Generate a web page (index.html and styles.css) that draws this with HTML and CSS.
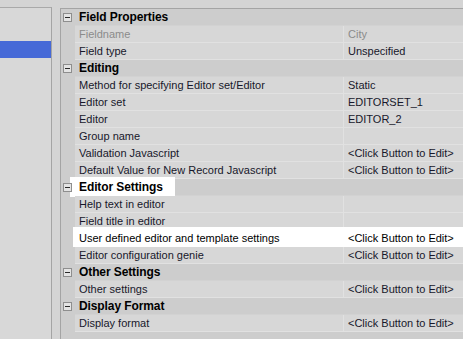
FILE: index.html
```html
<!DOCTYPE html>
<html lang="en">
<head>
    <meta charset="UTF-8">
    <title>Field Properties</title>
    <link rel="stylesheet" href="styles.css">
</head>
<body>
    <div class="window">
        <div class="sidebar">
            <div class="selected"></div>
        </div>
        <div class="grid">
            <div class="row cat">
                <span class="margin"><span class="toggle"></span></span>
                <span class="cat-name">Field Properties</span>
            </div>
            <div class="row disabled">
                <span class="margin"></span>
                <span class="name">Fieldname</span>
                <span class="value">City</span>
            </div>
            <div class="row">
                <span class="margin"></span>
                <span class="name">Field type</span>
                <span class="value">Unspecified</span>
            </div>

            <div class="row cat">
                <span class="margin"><span class="toggle"></span></span>
                <span class="cat-name">Editing</span>
            </div>
            <div class="row">
                <span class="margin"></span>
                <span class="name">Method for specifying Editor set/Editor</span>
                <span class="value">Static</span>
            </div>
            <div class="row">
                <span class="margin"></span>
                <span class="name">Editor set</span>
                <span class="value">EDITORSET_1</span>
            </div>
            <div class="row">
                <span class="margin"></span>
                <span class="name">Editor</span>
                <span class="value">EDITOR_2</span>
            </div>
            <div class="row">
                <span class="margin"></span>
                <span class="name">Group name</span>
                <span class="value"></span>
            </div>
            <div class="row">
                <span class="margin"></span>
                <span class="name">Validation Javascript</span>
                <span class="value">&lt;Click Button to Edit&gt;</span>
            </div>
            <div class="row">
                <span class="margin"></span>
                <span class="name">Default Value for New Record Javascript</span>
                <span class="value">&lt;Click Button to Edit&gt;</span>
            </div>

            <div class="row cat">
                <span class="margin"><span class="toggle"></span></span>
                <span class="cat-name"><span class="mark">Editor Settings</span></span>
            </div>
            <div class="row">
                <span class="margin"></span>
                <span class="name">Help text in editor</span>
                <span class="value"></span>
            </div>
            <div class="row">
                <span class="margin"></span>
                <span class="name">Field title in editor</span>
                <span class="value"></span>
            </div>
            <div class="row lit">
                <span class="margin"></span>
                <span class="name">User defined editor and template settings</span>
                <span class="value">&lt;Click Button to Edit&gt;</span>
            </div>
            <div class="row">
                <span class="margin"></span>
                <span class="name">Editor configuration genie</span>
                <span class="value">&lt;Click Button to Edit&gt;</span>
            </div>

            <div class="row cat">
                <span class="margin"><span class="toggle"></span></span>
                <span class="cat-name">Other Settings</span>
            </div>
            <div class="row">
                <span class="margin"></span>
                <span class="name">Other settings</span>
                <span class="value">&lt;Click Button to Edit&gt;</span>
            </div>

            <div class="row cat">
                <span class="margin"><span class="toggle"></span></span>
                <span class="cat-name">Display Format</span>
            </div>
            <div class="row">
                <span class="margin"></span>
                <span class="name">Display format</span>
                <span class="value">&lt;Click Button to Edit&gt;</span>
            </div>
        </div>
    </div>
</body>
</html>
```

FILE: styles.css
```css
body {
    margin: 0;
    background: #d4d4d4;
    color: #17172b;
    font-family: "Liberation Sans", Arial, sans-serif;
    font-size: 11px;
    height: 100vh;
    overflow: hidden;
}
.window {
    display: flex;
    height: 100%;
}
.sidebar {
    width: 51px;
    flex: none;
    margin-top: 7px;
    background: #d8d8d8;
    border-top: 1px solid #a9a9a9;
    border-right: 1px solid #a4a4a4;
}
.selected {
    margin-top: 33px;
    height: 17px;
    background: #4669d7;
}
.grid {
    flex: 1;
    margin-top: 8px;
    margin-left: 8px;
    background: #cdcdcd;
    border-top: 1px solid #a4a4a4;
    border-left: 1px solid #a4a4a4;
}
.row {
    display: flex;
    height: 17px;
    line-height: 16px;
    white-space: nowrap;
}
.margin {
    width: 14px;
    flex: none;
    position: relative;
}
.toggle {
    position: absolute;
    left: 2px;
    top: 4px;
    width: 7px;
    height: 7px;
    border: 1px solid #8e8e8e;
    background: #e4e4e4;
}
.toggle::after {
    content: "";
    position: absolute;
    left: 1px;
    top: 3px;
    width: 5px;
    height: 1px;
    background: #2a2a2a;
}
.name,
.value {
    background: #d7d7d7;
    border-bottom: 1px solid #e1e1e1;
    padding-left: 4px;
    overflow: hidden;
}
.name {
    width: 268px;
    flex: none;
    box-sizing: border-box;
}
.value {
    flex: 1;
    border-left: 1px solid #e1e1e1;
}
.disabled .name,
.disabled .value {
    color: #8b8b8b;
}
.cat-name {
    flex: 1;
    padding-left: 4px;
    font-weight: bold;
    font-size: 12px;
    letter-spacing: -0.1px;
    color: #000;
    border-bottom: 1px solid #d2d2d2;
}
.mark {
    display: inline-block;
    margin-left: -9px;
    padding: 2px 12px 2px 9px;
    margin-top: -2px;
    line-height: 16px;
    background: #fff;
}
.lit {
    position: relative;
}
.lit::before {
    content: "";
    position: absolute;
    left: 12px;
    right: 0;
    top: -3px;
    bottom: 0;
    background: #fff;
}
.lit .name,
.lit .value {
    position: relative;
    background: #fff;
    border-color: #fff;
    color: #000;
}
```
